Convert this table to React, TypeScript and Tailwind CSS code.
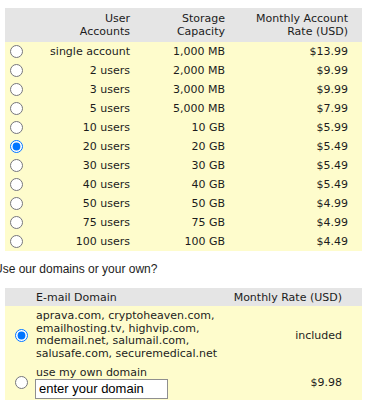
import React, { useState } from "react";

interface Plan {
  users: string;
  storage: string;
  rate: string;
}

const plans: Plan[] = [
  { users: "single account", storage: "1,000 MB", rate: "$13.99" },
  { users: "2 users", storage: "2,000 MB", rate: "$9.99" },
  { users: "3 users", storage: "3,000 MB", rate: "$9.99" },
  { users: "5 users", storage: "5,000 MB", rate: "$7.99" },
  { users: "10 users", storage: "10 GB", rate: "$5.99" },
  { users: "20 users", storage: "20 GB", rate: "$5.49" },
  { users: "30 users", storage: "30 GB", rate: "$5.49" },
  { users: "40 users", storage: "40 GB", rate: "$5.49" },
  { users: "50 users", storage: "50 GB", rate: "$4.99" },
  { users: "75 users", storage: "75 GB", rate: "$4.99" },
  { users: "100 users", storage: "100 GB", rate: "$4.49" },
];

const verdana = { fontFamily: '"DejaVu Sans", Verdana, sans-serif' };

function App() {
  const [plan, setPlan] = useState(5);
  const [domainChoice, setDomainChoice] = useState("ours");

  return (
    <div className="min-h-[409px] w-[372px] bg-white pt-2 text-[#1c1c1c]">
      <div
        className="ml-[5px] w-[357px] text-[11px] leading-[13px]"
        style={verdana}
      >
        <div className="grid grid-cols-[25px_100px_95px_123px_14px] bg-[#e5e5e5] pb-[4px] pt-[4px] text-right">
          <div />
          <div>
            User
            <br />
            Accounts
          </div>
          <div>
            Storage
            <br />
            Capacity
          </div>
          <div>
            Monthly Account
            <br />
            Rate (USD)
          </div>
          <div />
        </div>
        <div className="bg-[#fefccc]">
          {plans.map((p, i) => (
            <div
              key={p.users}
              className="grid h-[19px] grid-cols-[25px_100px_95px_123px_14px] items-center text-right"
            >
              <div className="flex items-center pl-[5px]">
                <input
                  type="radio"
                  name="plan"
                  checked={plan === i}
                  onChange={() => setPlan(i)}
                  className="m-0 h-[13px] w-[13px]"
                />
              </div>
              <div>{p.users}</div>
              <div>{p.storage}</div>
              <div>{p.rate}</div>
              <div />
            </div>
          ))}
        </div>
      </div>

      <p
        className="-ml-[6px] mt-[11px] text-[12px] leading-[14px]"
        style={{ fontFamily: '"Liberation Sans", Arial, sans-serif' }}
      >
        Use our domains or your own?
      </p>

      <div
        className="ml-[5px] mt-[12px] w-[357px] text-[11px] leading-[13px]"
        style={verdana}
      >
        <div className="grid h-[18px] grid-cols-[31px_1fr_auto] items-center bg-[#e5e5e5] pr-[20px]">
          <div />
          <div>E-mail Domain</div>
          <div>Monthly Rate (USD)</div>
        </div>
        <div className="bg-[#fefccc] pr-[20px]">
          <div className="grid grid-cols-[31px_1fr_auto] items-center pb-[2px] pt-[4px]">
            <div className="flex items-center pl-[10px]">
              <input
                type="radio"
                name="domain"
                checked={domainChoice === "ours"}
                onChange={() => setDomainChoice("ours")}
                className="m-0 h-[13px] w-[13px]"
              />
            </div>
            <div className="leading-[12.7px]">
              aprava.com, cryptoheaven.com,
              <br />
              emailhosting.tv, highvip.com,
              <br />
              mdemail.net, salumail.com,
              <br />
              salusafe.com, securemedical.net
            </div>
            <div>included</div>
          </div>
          <div className="grid grid-cols-[31px_1fr_auto] items-center pb-[1px] pt-[3px]">
            <div className="flex items-center pl-[10px]">
              <input
                type="radio"
                name="domain"
                checked={domainChoice === "own"}
                onChange={() => setDomainChoice("own")}
                className="m-0 h-[13px] w-[13px]"
              />
            </div>
            <div>
              <div>use my own domain</div>
              <input
                type="text"
                defaultValue="enter your domain"
                className="-ml-[1px] block h-[20px] w-[133px] border border-[#8f8f8f] bg-white px-[3px] text-[13px] text-black outline-none"
                style={{ fontFamily: '"Liberation Sans", Arial, sans-serif' }}
              />
            </div>
            <div>$9.98</div>
          </div>
        </div>
      </div>
    </div>
  );
}

export default App;
